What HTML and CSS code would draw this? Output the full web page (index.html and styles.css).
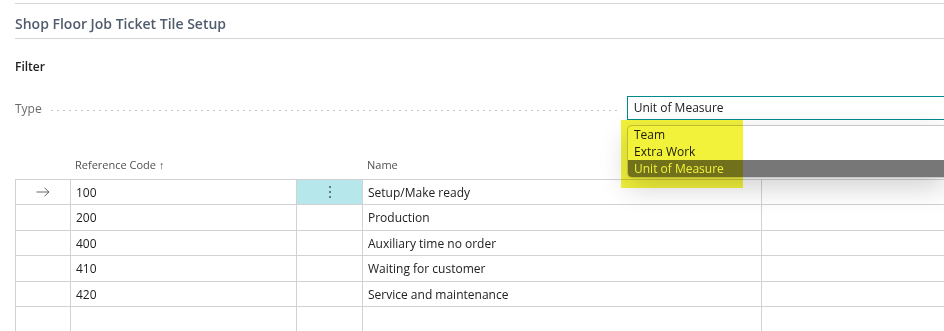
FILE: index.html
```html
<!DOCTYPE html>
<html>
<head>
<meta charset="utf-8">
<link rel="stylesheet" href="styles.css">
</head>
<body>
<div class="page">
  <div class="title-bar"><span class="title">Shop Floor Job Ticket Tile Setup</span></div>
  <div class="filter-head">Filter</div>
  <div class="type-row">
    <span class="type-label">Type</span>
    <span class="leader"></span>
    <div class="input">Unit of Measure</div>
  </div>
  <div class="grid">
    <div class="hrow">
      <div class="c c1"></div>
      <div class="c c2 hd">Reference Code <span class="sort">&#8593;</span></div>
      <div class="c c3"></div>
      <div class="c c4 hd">Name</div>
      <div class="c c5"></div>
    </div>
    <div class="row">
      <div class="c c1 arrow"><svg width="14" height="10" viewBox="0 0 14 10"><path d="M0.5 5H13M8.5 0.8L13 5L8.5 9.2" fill="none" stroke="#666" stroke-width="1"/></svg></div>
      <div class="c c2">100</div>
      <div class="c c3 sel"><svg width="4" height="14" viewBox="0 0 4 14"><circle cx="2" cy="2" r="1" fill="#555"/><circle cx="2" cy="7" r="1" fill="#555"/><circle cx="2" cy="12" r="1" fill="#555"/></svg></div>
      <div class="c c4">Setup/Make ready</div>
      <div class="c c5"></div>
    </div>
    <div class="row">
      <div class="c c1"></div><div class="c c2">200</div><div class="c c3"></div><div class="c c4">Production</div><div class="c c5"></div>
    </div>
    <div class="row">
      <div class="c c1"></div><div class="c c2">400</div><div class="c c3"></div><div class="c c4">Auxiliary time no order</div><div class="c c5"></div>
    </div>
    <div class="row">
      <div class="c c1"></div><div class="c c2">410</div><div class="c c3"></div><div class="c c4">Waiting for customer</div><div class="c c5"></div>
    </div>
    <div class="row">
      <div class="c c1"></div><div class="c c2">420</div><div class="c c3"></div><div class="c c4">Service and maintenance</div><div class="c c5"></div>
    </div>
    <div class="row">
      <div class="c c1"></div><div class="c c2"></div><div class="c c3"></div><div class="c c4"></div><div class="c c5"></div>
    </div>
  </div>
  <div class="dropdown">
    <div class="opt">Team</div>
    <div class="opt">Extra Work</div>
    <div class="opt active">Unit of Measure</div>
  </div>
  <div class="highlight"></div>
</div>
</body>
</html>
```
FILE: styles.css
```css
html, body {
  margin: 0;
  padding: 0;
  background: #fff;
  overflow: hidden;
}
body {
  font-family: "Segoe UI", "Open Sans", "Noto Sans", sans-serif;
  color: #212121;
  width: 944px;
  height: 331px;
}
.page {
  position: relative;
  height: 331px;
  padding-top: 3px;
  box-sizing: border-box;
}
.title-bar {
  margin-left: 15px;
  border-top: 1px solid #d6d6d6;
  border-bottom: 1px solid #d6d6d6;
  height: 34px;
  box-sizing: content-box;
  display: flex;
  align-items: center;
}
.title {
  font-size: 14px;
  font-weight: 600;
  color: #505c6d;
  position: relative;
  top: 2px;
}
.filter-head {
  margin: 19px 0 0 15px;
  font-size: 12px;
  font-weight: 600;
  color: #212121;
  height: 18px;
  line-height: 18px;
}
.type-row {
  margin-top: 20px;
  display: flex;
  align-items: center;
  height: 24px;
  padding-left: 15px;
}
.type-label {
  font-size: 12px;
  color: #6a6a6a;
}
.leader {
  flex: 0 0 auto;
  width: 572px;
  margin-left: 7px;
  margin-right: 6px;
  height: 1px;
  margin-top: 4px;
  background-image: radial-gradient(circle, #c4c4c4 0.6px, transparent 0.8px);
  background-size: 6px 1px;
  background-repeat: repeat-x;
}
.input {
  flex: 1;
  height: 24px;
  box-sizing: border-box;
  border: 1px solid #00898e;
  border-right: none;
  font-size: 12px;
  line-height: 22px;
  padding-left: 6px;
  color: #212121;
}
.grid {
  margin-top: 34px;
  margin-left: 15px;
}
.hrow, .row {
  display: flex;
}
.hrow {
  height: 25px;
}
.hrow .c {
  border: none;
  font-size: 11px;
  color: #505050;
  line-height: 20px;
  padding-top: 1px;
}
.sort {
  font-size: 11px;
  font-weight: 600;
}
.row {
  height: 25.4px;
  border-top: 1px solid #d2d2d2;
  box-sizing: border-box;
}
.c {
  box-sizing: border-box;
  padding-left: 5px;
  padding-top: 2px;
  font-size: 12px;
  line-height: 22px;
  white-space: nowrap;
}
.row .c {
  border-left: 1px solid #d2d2d2;
}
.c1 { width: 55px; }
.c2 { width: 226px; }
.c3 { width: 66px; }
.c4 { width: 399px; }
.c5 { flex: 1; }
.arrow {
  display: flex;
  justify-content: center;
  align-items: center;
  padding-left: 0;
  padding-top: 0;
}
.sel {
  background: #b6e7eb;
  display: flex;
  justify-content: center;
  align-items: center;
  padding-left: 0;
  padding-top: 0;
}
.dropdown {
  position: absolute;
  left: 627px;
  top: 125px;
  right: 0;
  height: 53px;
  background: #fff;
  border: 1px solid #c8c8c8;
  border-right: none;
  border-radius: 5px 0 0 5px;
  box-shadow: 0 10px 28px rgba(0, 0, 0, 0.18);
  overflow: hidden;
  box-sizing: border-box;
}
.opt {
  height: 17px;
  line-height: 17px;
  font-size: 12px;
  padding-left: 6px;
  color: #212121;
}
.opt.active {
  background: #777;
  color: #fff;
  height: 18px;
}
.highlight {
  position: absolute;
  left: 621px;
  top: 120px;
  width: 122px;
  height: 68px;
  background: #f2f23a;
  mix-blend-mode: multiply;
}
```
